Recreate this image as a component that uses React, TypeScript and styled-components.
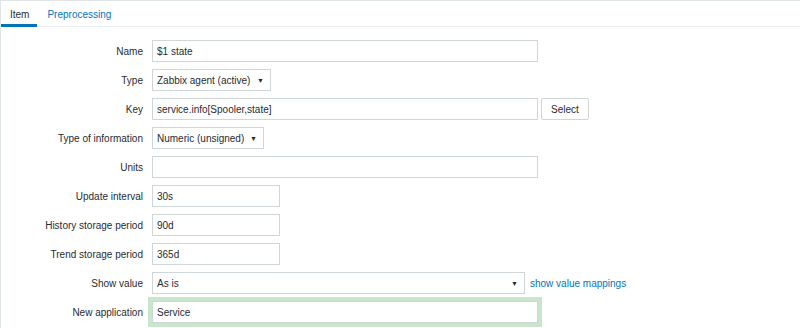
import { Fragment } from 'react';
import styled, { createGlobalStyle } from 'styled-components';

const GlobalStyle = createGlobalStyle`
	html, body {
		margin: 0;
		padding: 0;
		background: #ffffff;
	}
	body {
		font-family: 'Liberation Sans', Arial, sans-serif;
		font-size: 10px;
		color: #1f2c33;
	}
`;

const Styles = {
	Wrapper: styled.div`
		width: 800px;
		height: 328px;
		box-sizing: border-box;
		border-top: 1px solid #dfe4e7;
		border-left: 1px solid #dfe4e7;
		overflow: hidden;
	`,
	TabBar: styled.ul`
		display: flex;
		margin: 0;
		padding: 0;
		list-style: none;
		height: 26px;
		border-bottom: 1px solid #ebeef0;
		box-sizing: border-box;
	`,
	Tab: styled.li<{ $active?: boolean }>`
		display: flex;
		align-items: center;
		padding: 3px 8px 0 9px;
		margin-right: 1px;
		box-sizing: border-box;
		height: 26px;
		color: ${(p) => (p.$active ? '#1f2c33' : '#0275b8')};
		border-bottom: 3px solid ${(p) => (p.$active ? '#0275b8' : 'transparent')};
		cursor: pointer;
	`,
	Form: styled.div`
		display: grid;
		grid-template-columns: 142px 1fr;
		column-gap: 9px;
		row-gap: 7px;
		padding-top: 13px;
	`,
	Label: styled.label`
		display: flex;
		align-items: center;
		justify-content: flex-end;
		height: 22px;
		white-space: nowrap;
	`,
	Field: styled.div`
		display: flex;
		align-items: center;
		gap: 3px;
		height: 22px;
	`,
	Input: styled.div<{ $width: number; $highlight?: boolean }>`
		width: ${(p) => p.$width}px;
		height: 22px;
		box-sizing: border-box;
		border: 1px solid #cfd6da;
		background: #ffffff;
		padding: 0 4px;
		display: flex;
		align-items: center;
		white-space: nowrap;
		box-shadow: ${(p) => (p.$highlight ? '0 0 0 4px #c8e6c9' : 'none')};
	`,
	Select: styled.div<{ $width: number }>`
		width: ${(p) => p.$width}px;
		height: 22px;
		box-sizing: border-box;
		border: 1px solid #cfd6da;
		background: #ffffff;
		padding: 0 6px 0 4px;
		display: flex;
		align-items: center;
		justify-content: space-between;
		white-space: nowrap;
	`,
	Arrow: styled.span`
		font-size: 7px;
		color: #1f2c33;
	`,
	Button: styled.button`
		height: 22px;
		width: 48px;
		box-sizing: border-box;
		border: 1px solid #cfd6da;
		background: #ffffff;
		font-family: inherit;
		font-size: 10px;
		color: #1f2c33;
		padding: 0;
		border-radius: 2px;
	`,
	Link: styled.a`
		color: #0275b8;
		margin-left: 2px;
		text-decoration: none;
		white-space: nowrap;
	`,
};

type Row = {
	label: string;
	kind: 'input' | 'select';
	value: string;
	width: number;
	button?: string;
	link?: string;
	highlight?: boolean;
};

const rows: Row[] = [
	{ label: 'Name', kind: 'input', value: '$1 state', width: 386 },
	{ label: 'Type', kind: 'select', value: 'Zabbix agent (active)', width: 119 },
	{ label: 'Key', kind: 'input', value: 'service.info[Spooler,state]', width: 386, button: 'Select' },
	{ label: 'Type of information', kind: 'select', value: 'Numeric (unsigned)', width: 112 },
	{ label: 'Units', kind: 'input', value: '', width: 386 },
	{ label: 'Update interval', kind: 'input', value: '30s', width: 128 },
	{ label: 'History storage period', kind: 'input', value: '90d', width: 128 },
	{ label: 'Trend storage period', kind: 'input', value: '365d', width: 128 },
	{ label: 'Show value', kind: 'select', value: 'As is', width: 373, link: 'show value mappings' },
	{ label: 'New application', kind: 'input', value: 'Service', width: 386, highlight: true },
];

export default function App() {
	return (
		<>
			<GlobalStyle />
			<Styles.Wrapper>
				<Styles.TabBar>
					<Styles.Tab $active>Item</Styles.Tab>
					<Styles.Tab>Preprocessing</Styles.Tab>
				</Styles.TabBar>
				<Styles.Form>
					{rows.map((row) => (
						<Fragment key={row.label}>
							<Styles.Label>{row.label}</Styles.Label>
							<Styles.Field>
								{row.kind === 'input' ? (
									<Styles.Input $width={row.width} $highlight={row.highlight}>
										{row.value}
									</Styles.Input>
								) : (
									<Styles.Select $width={row.width}>
										<span>{row.value}</span>
										<Styles.Arrow>▼</Styles.Arrow>
									</Styles.Select>
								)}
								{row.button && <Styles.Button>{row.button}</Styles.Button>}
								{row.link && <Styles.Link href="#">{row.link}</Styles.Link>}
							</Styles.Field>
						</Fragment>
					))}
				</Styles.Form>
			</Styles.Wrapper>
		</>
	);
}
